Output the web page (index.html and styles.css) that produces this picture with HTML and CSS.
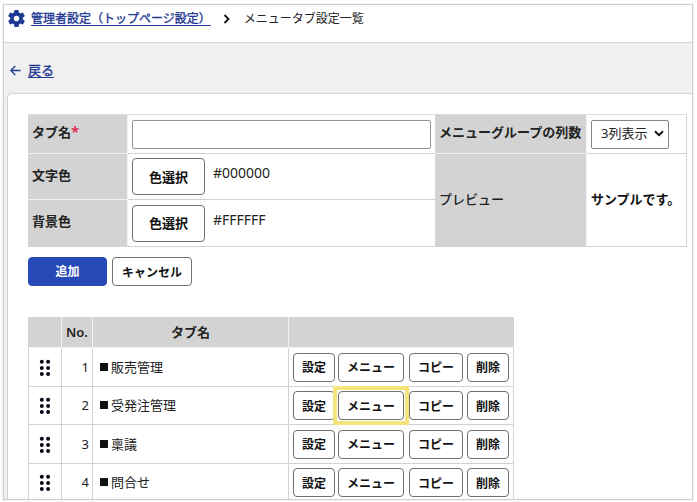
FILE: index.html
```
<!DOCTYPE html>
<html lang="ja">
<head>
<meta charset="utf-8">
<title>メニュータブ設定一覧</title>
<link rel="stylesheet" href="styles.css">
</head>
<body>
<svg class="defs" width="0" height="0" aria-hidden="true">
  <symbol id="grip" viewBox="0 0 12 18">
    <circle cx="2.8" cy="2.7" r="2"/><circle cx="9.1" cy="2.7" r="2"/>
    <circle cx="2.8" cy="8.9" r="2"/><circle cx="9.1" cy="8.9" r="2"/>
    <circle cx="2.8" cy="15.1" r="2"/><circle cx="9.1" cy="15.1" r="2"/>
  </symbol>
</svg>
<div class="frame">
  <header class="crumbs">
    <svg class="gear" viewBox="2 2 20 20"><path fill-rule="evenodd" d="M19.4 13a7.500 7.500 0 0 0 0-2l2.100-1.650a.5.5 0 0 0 .12-.64l-2-3.460a.5.5 0 0 0-.6-.22l-2.500 1a7.300 7.300 0 0 0-1.700-1l-.38-2.600A.5.5 0 0 0 14 2h-4a.5.5 0 0 0-.5.42l-.38 2.650a7.300 7.300 0 0 0-1.700 1l-2.500-1a.5.5 0 0 0-.6.22l-2 3.460a.5.5 0 0 0 .12.64L4.600 11a7.500 7.500 0 0 0 0 2l-2.100 1.650a.5.5 0 0 0-.12.640l2 3.460a.5.5 0 0 0 .6.220l2.500-1a7.300 7.300 0 0 0 1.700 1l.38 2.600A.5.5 0 0 0 10 22h4a.5.5 0 0 0 .5-.42l.38-2.650a7.300 7.300 0 0 0 1.700-1l2.500 1a.5.5 0 0 0 .6-.22l2-3.460a.5.5 0 0 0-.12-.64zM12 15.200a3.200 3.200 0 1 1 0-6.400 3.200 3.200 0 0 1 0 6.400z"/></svg>
    <a class="link">管理者設定（トップページ設定）</a>
    <svg class="chevron" viewBox="0 0 8 10"><path d="M1.500 1 5.500 5 1.500 9"/></svg>
    <span>メニュータブ設定一覧</span>
  </header>
  <nav class="back">
    <svg class="arrow" viewBox="0 0 11 11"><path d="M10.500 5.500H1M5.300 1 .8 5.500l4.500 4.500"/></svg>
    <a class="link">戻る</a>
  </nav>
  <main class="panel">
    <table class="form">
      <colgroup><col class="f1"><col class="f2"><col class="f3"><col class="f4"></colgroup>
      <tr class="first">
        <th>タブ名<span class="required">*</span></th>
        <td><input class="name" type="text"></td>
        <th>メニューグループの列数</th>
        <td><div class="select"><span>3列表示</span><svg viewBox="0 0 10 7"><path d="M1 1.300 5 5.200 9 1.300"/></svg></div></td>
      </tr>
      <tr class="second">
        <th>文字色</th>
        <td><div class="color"><button class="btn pick">色選択</button><span>#000000</span></div></td>
        <th rowspan="2" class="light">プレビュー</th>
        <td rowspan="2" class="sample">サンプルです。</td>
      </tr>
      <tr class="third">
        <th>背景色</th>
        <td><div class="color"><button class="btn pick">色選択</button><span>#FFFFFF</span></div></td>
      </tr>
    </table>
    <div class="actions"><button class="btn primary">追加</button><button class="btn cancel">キャンセル</button></div>
    <table class="list">
      <colgroup><col class="c1"><col class="c2"><col class="c3"><col class="c4"></colgroup>
      <tr><th></th><th>No.</th><th>タブ名</th><th></th></tr>
      <tr><td class="drag"><svg><use href="#grip"/></svg></td><td class="no">1</td><td><span class="title"><i></i>販売管理</span></td>
        <td><div class="ops"><button class="btn">設定</button><button class="btn menu">メニュー</button><button class="btn copy">コピー</button><button class="btn">削除</button></div></td></tr>
      <tr><td class="drag"><svg><use href="#grip"/></svg></td><td class="no">2</td><td><span class="title"><i></i>受発注管理</span></td>
        <td><div class="ops"><button class="btn">設定</button><button class="btn menu marked">メニュー</button><button class="btn copy">コピー</button><button class="btn">削除</button></div></td></tr>
      <tr><td class="drag"><svg><use href="#grip"/></svg></td><td class="no">3</td><td><span class="title"><i></i>稟議</span></td>
        <td><div class="ops"><button class="btn">設定</button><button class="btn menu">メニュー</button><button class="btn copy">コピー</button><button class="btn">削除</button></div></td></tr>
      <tr><td class="drag"><svg><use href="#grip"/></svg></td><td class="no">4</td><td><span class="title"><i></i>問合せ</span></td>
        <td><div class="ops"><button class="btn">設定</button><button class="btn menu">メニュー</button><button class="btn copy">コピー</button><button class="btn">削除</button></div></td></tr>
    </table>
  </main>
</div>
</body>
</html>
```
FILE: styles.css
```
* { box-sizing: border-box; }
body {
  margin: 0;
  height: 502px;
  overflow: hidden;
  background: #fff;
  color: #222;
  font: 13px/18px "Noto Sans", "Noto Sans CJK JP", sans-serif;
}
.defs { position: absolute; }
.frame {
  width: 690px;
  height: 496px;
  margin: 4px 0 0 3px;
  border: 1px solid #cfcfcf;
  background: #f0f0f0;
  overflow: hidden;
  box-shadow: 0 0 0 1px #f3f3f3;
}
.crumbs {
  display: flex;
  align-items: center;
  height: 38px;
  padding: 0 0 10px 4px;
  background: #fff;
  border-bottom: 1px solid #d2d2d2;
  font-size: 12px;
}
.link { color: #1f3a93; -webkit-text-stroke: .35px #1f3a93; text-decoration: underline; text-underline-offset: 2px; }
.gear { width: 17px; height: 17px; margin-right: 6px; fill: #1f3a93; }
.chevron { width: 8px; height: 10px; margin: 0 13px 0 12px; fill: none; stroke: #111; stroke-width: 1.8; }
.back { display: flex; align-items: center; height: 50px; padding: 4px 0 0 6px; }
.arrow { width: 11px; height: 11px; margin-right: 7px; fill: none; stroke: #1f3a93; stroke-width: 1.3; }
.panel {
  height: 420px;
  margin-left: 3px;
  padding: 20px 0 0 20px;
  background: #fff;
  border: 1px solid #d2d2d2;
  border-right: 0;
  border-radius: 5px 0 0 0;
}
table { table-layout: fixed; border-collapse: separate; border-spacing: 0; }
th, td { padding: 0; border-right: 1px solid #d3d3d3; border-bottom: 1px solid #d3d3d3; }
th { background: #d3d3d3; border-color: #f2f2f2; font-weight: 600; }
.form { width: 659px; border-top: 1px solid #dedede; }
.form th { padding: 0 0 4px 4px; text-align: left; }
.form td { padding-left: 4px; }
.form td:nth-child(2) { border-right: 0; }
.form tr:last-child th, .form .light { border-bottom-color: #d3d3d3; }
.f1 { width: 100px; } .f2 { width: 307px; } .f3 { width: 152px; } .f4 { width: 100px; }
.first { height: 39px; } .second { height: 46px; } .third { height: 47px; }
.form .light { padding-bottom: 2px; font-weight: 500; }
.form .sample { padding-bottom: 2px; font-weight: 700; color: #111; }
.required { color: #dc2448; font-size: 15px; line-height: 14px; }
.name { display: block; width: 299px; height: 29px; padding: 0 6px; border: 1px solid #969696; border-radius: 2px; }
.select { display: flex; align-items: center; justify-content: space-between; width: 78px; height: 29px; padding: 0 4px 2px 9px; border: 1px solid #858585; border-radius: 2px; }
.select svg { width: 10px; height: 7px; fill: none; stroke: #111; stroke-width: 2; }
.color { display: flex; gap: 8px; }
.color span { margin-top: 6px; font-size: 14px; }
.btn {
  width: 42px;
  height: 29px;
  padding: 2px 0 0;
  border: 1px solid #707070;
  border-radius: 4px;
  background: #fff;
  color: #111;
  font: 600 12px/18px "Noto Sans", "Noto Sans CJK JP", sans-serif;
  white-space: nowrap;
}
.pick { width: 73px; height: 37px; padding: 0; font-size: 13px; }
.actions { display: flex; gap: 5px; margin-top: 10px; }
.primary { width: 79px; padding: 0; background: #2849b8; border-color: #2849b8; color: #fff; }
.cancel { width: 80px; }
.list { width: 486px; margin-top: 31px; }
.list tr { height: 38px; }
.list tr:first-child { height: 31px; }
.list tr:nth-child(2) { height: 39px; }
.list tr:nth-child(4) { height: 39px; }
.c1 { width: 34px; } .c2 { width: 31px; } .c3 { width: 196px; } .c4 { width: 225px; }
.list td:first-child { border-left: 1px solid #d3d3d3; }
.list th:last-child { border-right-color: #d3d3d3; }
.drag { text-align: center; }
.drag svg { display: block; width: 12px; height: 18px; margin: 1px auto 0; fill: #080818; }
.no { padding: 0 3px 1px 0; text-align: right; }
.title { display: flex; align-items: center; gap: 3px; padding: 0 0 1px 7px; }
.title i { width: 8px; height: 8px; background: #111; }
.ops { display: flex; gap: 4px; padding-left: 4px; }
.ops .btn { flex: none; }
.ops .menu { width: 66px; margin-left: -1px; }
.ops .copy { width: 54px; margin-left: 1px; }
.marked { position: relative; }
.marked::after {
  content: "";
  position: absolute;
  inset: -6px;
  border: 4px solid #f4e47a;
}
```
